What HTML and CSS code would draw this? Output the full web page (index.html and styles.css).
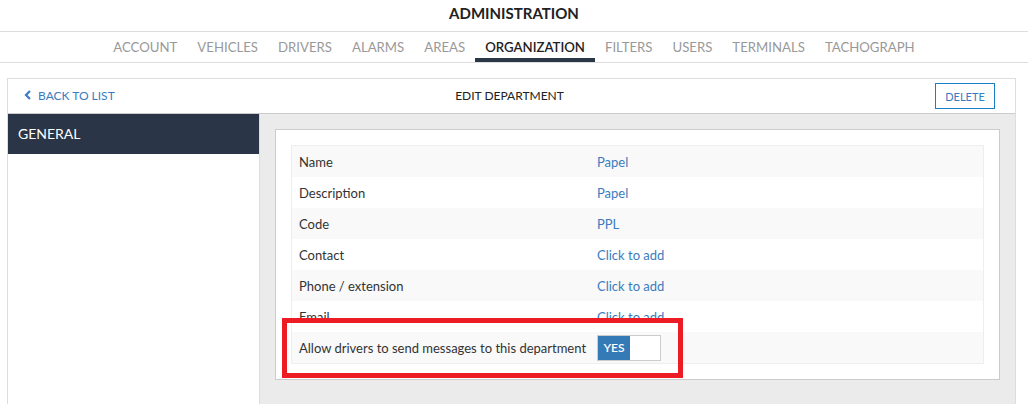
FILE: index.html
```html
<!DOCTYPE html>
<html lang="en">
<head>
  <meta charset="UTF-8">
  <title>Administration</title>
  <link rel="stylesheet" href="styles.css">
</head>
<body>
  <div class="page-title">ADMINISTRATION</div>
  <div class="tabs">
    <a class="tab">ACCOUNT</a>
    <a class="tab">VEHICLES</a>
    <a class="tab">DRIVERS</a>
    <a class="tab">ALARMS</a>
    <a class="tab">AREAS</a>
    <a class="tab active">ORGANIZATION</a>
    <a class="tab">FILTERS</a>
    <a class="tab">USERS</a>
    <a class="tab">TERMINALS</a>
    <a class="tab">TACHOGRAPH</a>
  </div>

  <div class="panel">
    <div class="panel-head">
      <a class="back-link">
        <svg width="8" height="10" viewBox="0 0 8 10"><path d="M6 1 L2 5 L6 9" fill="none" stroke="#3a7cc0" stroke-width="2.2"/></svg>
        BACK TO LIST
      </a>
      <div class="panel-title">EDIT DEPARTMENT</div>
      <button class="btn-delete">DELETE</button>
    </div>
    <div class="panel-body">
      <div class="sidebar">
        <div class="side-item active">GENERAL</div>
      </div>
      <div class="content">
        <div class="card">
          <div class="props">
            <div class="prop"><span class="prop-label">Name</span><span class="prop-value">Papel</span></div>
            <div class="prop"><span class="prop-label">Description</span><span class="prop-value">Papel</span></div>
            <div class="prop"><span class="prop-label">Code</span><span class="prop-value">PPL</span></div>
            <div class="prop"><span class="prop-label">Contact</span><span class="prop-value">Click to add</span></div>
            <div class="prop"><span class="prop-label">Phone / extension</span><span class="prop-value">Click to add</span></div>
            <div class="prop"><span class="prop-label">Email</span><span class="prop-value">Click to add</span></div>
            <div class="prop">
              <span class="prop-label">Allow drivers to send messages to this department</span>
              <span class="prop-value">
                <span class="toggle"><span class="toggle-on">YES</span></span>
              </span>
            </div>
          </div>
          <div class="highlight"></div>
        </div>
      </div>
    </div>
  </div>
</body>
</html>
```

FILE: styles.css
```css
body {
  margin: 0;
  font-family: 'Lato', 'Liberation Sans', sans-serif;
  background-color: #fff;
  color: #333;
  overflow: hidden;
}
.page-title {
  height: 31px;
  line-height: 26px;
  text-align: center;
  font-size: 15px;
  font-weight: bold;
  color: #222;
  border-bottom: 1px solid #ddd;
}
.tabs {
  display: flex;
  justify-content: center;
  height: 30px;
  border-bottom: 1px solid #ddd;
}
.tab {
  padding: 0 10px;
  font-size: 13.2px;
  line-height: 30px;
  color: #999;
  border-bottom: 4px solid transparent;
  height: 26px;
}
.tab.active {
  color: #222;
  font-weight: 600;
  border-bottom-color: #2b3646;
}
.panel {
  margin: 15px 12px 0 7px;
  border: 1px solid #ddd;
  border-bottom: none;
}
.panel-head {
  display: flex;
  align-items: center;
  justify-content: space-between;
  height: 34px;
  padding: 0 20px 0 16px;
  border-bottom: 1px solid #ccc;
}
.back-link {
  display: flex;
  align-items: center;
  gap: 6px;
  font-size: 12px;
  color: #3a7cc0;
  width: 200px;
  margin-top: -2px;
}
.panel-title {
  font-size: 12px;
  color: #222;
  margin-top: -1px;
}
.btn-delete {
  width: 60px;
  height: 26px;
  padding: 0;
  margin-left: 140px;
  background: #fff;
  border: 1px solid #1a7ec4;
  color: #3a7cc0;
  font-family: inherit;
  font-size: 11px;
}
.panel-body {
  display: flex;
  height: 290px;
}
.sidebar {
  width: 251px;
  border-right: 1px solid #ddd;
}
.side-item {
  height: 40px;
  line-height: 40px;
  padding-left: 10px;
  font-size: 14px;
}
.side-item.active {
  background-color: #2a3547;
  color: #fff;
}
.content {
  flex: 1;
  background-color: #ebebeb;
  padding: 15px;
}
.card {
  position: relative;
  background-color: #fff;
  border: 1px solid #ccc;
  padding: 15px;
}
.props {
  border: 1px solid #eee;
}
.prop {
  display: flex;
  align-items: center;
  height: 31px;
  font-size: 13px;
}
.prop:nth-child(odd) {
  background-color: #f9f9f9;
}
.prop-label {
  width: 285px;
  padding: 0 7px;
  flex-shrink: 0;
  white-space: nowrap;
  color: #333;
}
.prop-value {
  padding: 0 6px;
  color: #3a7cc0;
}
.toggle {
  display: flex;
  width: 62px;
  height: 24px;
  border: 1px solid #ccc;
  background: #fff;
}
.toggle-on {
  width: 32px;
  background-color: #337ab7;
  color: #fff;
  font-size: 12px;
  font-weight: 600;
  line-height: 24px;
  text-align: center;
}
.highlight {
  position: absolute;
  left: 6px;
  top: 188px;
  width: 391px;
  height: 50px;
  border: 5px solid #ed1c24;
}
```
